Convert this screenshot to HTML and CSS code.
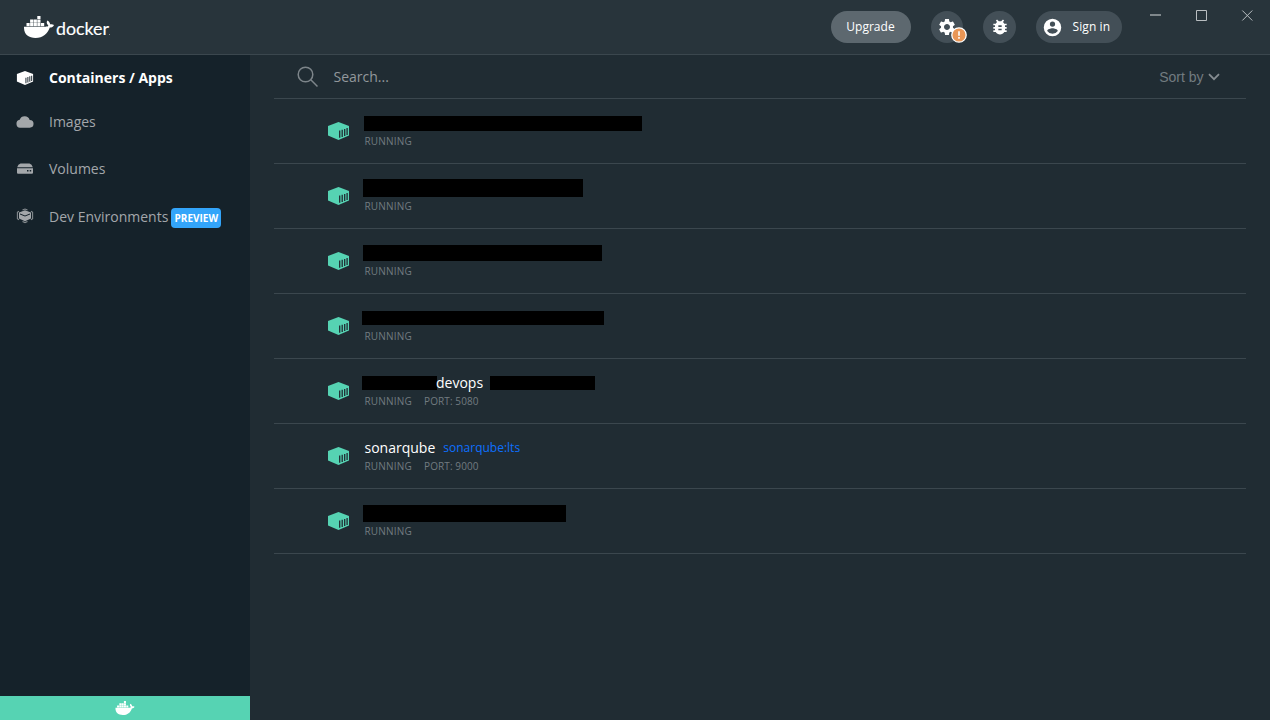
FILE: index.html
```html
<!DOCTYPE html>
<html lang="en">
<head>
<meta charset="utf-8">
<title>Docker Desktop</title>
<link rel="stylesheet" href="styles.css">
</head>
<body>
<svg class="defs" aria-hidden="true">
  <symbol id="whale" viewBox="0 0 30 22">
    <path d="M9.700 3.600h3.200v3.100h-3.200zM6.100 3.600h3.200v3.100h-3.200zM13.300 3.600h3.200v3.100h-3.200zM2.500 7.100h3.200v3.200h-3.200zM6.100 7.100h3.200v3.200h-3.200zM9.700 7.100h3.200v3.200h-3.200zM13.300 7.100h3.200v3.200h-3.200zM17 7.100h3.200v3.200h-3.200zM13.300 0h3.200v3.100h-3.200z"/>
    <path d="M0 10.700h21.500c1.600 0 2.600-.4 2.900-1.200C22.700 8.100 22.200 6.300 23.400 4.500c1.800 1.100 2.600 2.300 2.700 3.800 1.400-.3 2.800-.1 3.900.6-.8 1.800-2.200 2.600-4.200 2.700C23.600 18 19 22 11.500 22 4.500 22-.3 18.500 0 10.700z"/>
  </symbol>
  <symbol id="box" viewBox="0 0 22 18">
    <path fill="currentColor" d="M11 0 21.500 4v9.500L11 18 0.500 13.500V4z"/>
    <path class="slats" d="M12.200 8.600v7.200M14.700 7.800v7.100M17.200 6.900v7M19.600 6.100v6.900"/>
  </symbol>
</svg>
<div class="app">
  <header class="topbar">
    <div class="brand">
      <svg class="brand-whale"><use href="#whale"/></svg>
      <svg class="brand-name" viewBox="0 0 58 24"><text x="0" y="19" textLength="53" lengthAdjust="spacingAndGlyphs">docker</text><circle cx="53.600" cy="18.500" r=".4"/></svg>
    </div>
    <div class="actions">
      <button class="pill upgrade">Upgrade</button>
      <button class="pill round settings" aria-label="Settings">
        <svg width="20" height="20" viewBox="0 0 24 24"><path d="M19.140 12.940c.04-.3.060-.61.060-.94s-.02-.64-.07-.94l2.030-1.580c.18-.14.230-.41.120-.61l-1.920-3.320c-.12-.22-.37-.29-.59-.22l-2.390.96c-.5-.38-1.030-.7-1.620-.94l-.36-2.540c-.04-.24-.24-.41-.48-.41h-3.840c-.24 0-.43.170-.47.410l-.36 2.540c-.59.240-1.130.570-1.620.94l-2.390-.96c-.22-.08-.47 0-.59.220L2.740 8.870c-.12.210-.08.470.12.610l2.030 1.580c-.05.300-.09.630-.09.940s.02.640.07.940l-2.030 1.580c-.18.140-.23.410-.12.610l1.920 3.320c.12.220.37.290.59.220l2.390-.96c.5.380 1.030.7 1.620.94l.36 2.540c.05.240.24.410.48.410h3.840c.24 0 .44-.17.47-.41l.36-2.540c.59-.24 1.130-.56 1.620-.94l2.390.96c.22.080.47 0 .59-.22l1.920-3.320c.12-.22.070-.47-.12-.61zM12 15.600c-1.980 0-3.600-1.620-3.600-3.600s1.620-3.600 3.600-3.600 3.600 1.620 3.600 3.600-1.620 3.600-3.600 3.600z"/></svg>
        <svg class="alert" viewBox="0 0 16 16"><circle cx="8" cy="8" r="7.200"/><path d="M8 4.300v4.400M8 10v1.700"/></svg>
      </button>
      <button class="pill round bug" aria-label="Troubleshoot">
        <svg width="20" height="20" viewBox="0 0 24 24"><path d="M20 8h-2.810c-.45-.78-1.070-1.450-1.820-1.960L17 4.410 15.590 3l-2.170 2.170a6 6 0 0 0-2.830 0L8.410 3 7 4.410l1.620 1.630C7.880 6.550 7.260 7.220 6.810 8H4v2h2.090c-.05.330-.09.660-.09 1v1H4v2h2v1c0 .34.040.67.090 1H4v2h2.810a6 6 0 0 0 10.380 0H20v-2h-2.090c.05-.33.090-.66.090-1v-1h2v-2h-2v-1c0-.34-.04-.67-.09-1H20zm-6 8h-4v-2h4zm0-4h-4v-2h4z"/></svg>
      </button>
      <button class="pill signin">
        <svg width="21" height="21" viewBox="0 0 24 24"><path d="M12 2a10 10 0 1 0 0 20 10 10 0 0 0 0-20zm0 3a3 3 0 1 1 0 6 3 3 0 0 1 0-6zm0 14.200a7.200 7.200 0 0 1-6-3.220c.03-1.990 4-3.080 6-3.080s5.970 1.090 6 3.080a7.200 7.200 0 0 1-6 3.220z"/></svg>
        <span>Sign in</span>
      </button>
    </div>
    <svg class="window-buttons" viewBox="0 0 106 14"><path d="M1 7h11" class="minimize"/><path d="M47.500 2.500h10v10h-10z"/><path d="M93.300 2.500l10 10M103.300 2.500l-10 10"/></svg>
  </header>
  <div class="body">
    <aside class="sidebar">
      <nav>
        <a class="nav active"><svg class="nav-icon" viewBox="0 0 22 18"><use href="#box"/></svg>Containers / Apps</a>
        <a class="nav"><svg class="nav-icon" viewBox="0 0 18 14"><path fill="currentColor" d="M4 12.700a4 4 0 0 1-.3-7.900A5.300 5.300 0 0 1 13.700 4.900a3.900 3.900 0 0 1-.1 7.800z"/></svg>Images</a>
        <a class="nav"><svg class="nav-icon" viewBox="0 0 18 14"><path fill="currentColor" d="M4.500 1.500h9q2.500.5 3.300 3.800H1.200Q2 2 4.500 1.500zM1 6.200h16v4.600q0 1-1 1H2q-1 0-1-1z"/><path class="cut" d="M11 8h1.500v1.500H11zM13.700 8h1.500v1.500h-1.500z"/></svg>Volumes</a>
        <a class="nav"><svg class="nav-icon dev" viewBox="0 0 18 16"><path fill="currentColor" d="M9 2.200l6 2.400v6L9 13.200l-6-2.600v-6z"/><path class="lines" d="M4 6 9 8l5-2"/><path class="frame" d="M6.500 2 9 1l2.500 1M3 3.300 1.400 4.300v6.500l1.600 1M15 3.300l1.600 1v6.500l-1.600 1M6.500 13.500 9 14.600l2.500-1.100"/></svg>Dev Environments<span class="preview">PREVIEW</span></a>
      </nav>
      <div class="engine"><svg><use href="#whale"/></svg></div>
    </aside>
    <main class="content">
      <div class="search">
        <svg class="magnifier" viewBox="0 0 22 22"><circle cx="8.500" cy="8.500" r="7.300"/><path d="M13.800 13.800 20.500 20.500"/></svg>
        <span class="placeholder">Search...</span>
        <span class="sort">Sort by<svg viewBox="0 0 12 8"><path d="M1 1.200 6 6.200 11 1.200"/></svg></span>
      </div>
      <section class="list">
        <article class="row"><svg class="box"><use href="#box"/></svg><div class="info"><div class="name"><i class="bar b1"></i></div><div class="meta"><span>RUNNING</span></div></div></article>
        <article class="row"><svg class="box"><use href="#box"/></svg><div class="info"><div class="name"><i class="bar b2"></i></div><div class="meta"><span>RUNNING</span></div></div></article>
        <article class="row"><svg class="box"><use href="#box"/></svg><div class="info"><div class="name"><i class="bar b3"></i></div><div class="meta"><span>RUNNING</span></div></div></article>
        <article class="row"><svg class="box"><use href="#box"/></svg><div class="info"><div class="name"><i class="bar b4"></i></div><div class="meta"><span>RUNNING</span></div></div></article>
        <article class="row"><svg class="box"><use href="#box"/></svg><div class="info"><div class="name"><i class="bar b5"></i><span class="title devops">devops</span><i class="bar b6"></i></div><div class="meta"><span>RUNNING</span><span class="port">PORT: 5080</span></div></div></article>
        <article class="row"><svg class="box"><use href="#box"/></svg><div class="info"><div class="name sonar"><span class="title">sonarqube</span><span class="image">sonarqube:lts</span></div><div class="meta"><span>RUNNING</span><span class="port">PORT: 9000</span></div></div></article>
        <article class="row"><svg class="box"><use href="#box"/></svg><div class="info"><div class="name"><i class="bar b7"></i></div><div class="meta"><span>RUNNING</span></div></div></article>
      </section>
    </main>
  </div>
</div>
</body>
</html>
```
FILE: styles.css
```css
* { box-sizing: border-box; }
body { margin: 0; background: #202c33; color: #fff; font-family: "Open Sans", sans-serif; font-size: 14px; overflow: hidden; }
button { border: 0; color: #fff; font: inherit; padding: 0; }
svg { display: block; flex: none; fill: #fff; }
.defs { position: absolute; width: 0; height: 0; }
.app { width: 1270px; height: 720px; display: flex; flex-direction: column; }

.topbar { height: 55px; flex: none; background: #28343b; border-bottom: 1px solid #3b474e; display: flex; align-items: flex-start; }
.brand { display: flex; padding: 16px 0 0 24px; width: 831px; }
.brand-whale { width: 30px; height: 22px; }
.brand-name { width: 58px; height: 24px; margin-left: 2px; }
.brand-name text { font: 18px Lato, sans-serif; stroke: #fff; stroke-width: .15; }
.actions { display: flex; padding-top: 11px; font-size: 12px; line-height: 16px; }
.pill { height: 32px; border-radius: 16px; background: #434f57; display: flex; align-items: center; }
.upgrade { width: 80px; background: #5d686f; justify-content: center; padding-right: 1px; }
.round { width: 32px; justify-content: center; }
.settings { position: relative; margin-left: 20px; }
.alert { position: absolute; left: 20px; top: 16px; width: 16px; height: 16px; }
.alert circle { fill: #ea9655; stroke: #fff; stroke-width: 1.300; }
.alert path { stroke: #fff; stroke-width: 1.600; }
.bug { width: 33px; margin-left: 20px; }
.signin { width: 86px; margin-left: 20px; padding-left: 6px; }
.signin span { margin-left: 9.500px; letter-spacing: .1px; }
.window-buttons { width: 106px; height: 14px; margin: 8px 0 0 27px; fill: none; stroke: #b9bec1; stroke-width: 1; }
.minimize { stroke: #7f878b; stroke-width: 2; }

.body { flex: 1; display: flex; min-height: 0; }
.sidebar { width: 250px; background: #15222a; display: flex; flex-direction: column; justify-content: space-between; }
.nav { height: 47px; display: flex; align-items: center; padding-left: 16px; color: #a3a7aa; }
.nav:nth-child(2) { height: 43px; }
.nav:nth-child(3) { height: 51px; }
.nav:nth-child(4) { height: 44px; }
.nav.active { height: 45px; color: #fff; font-weight: 700; }
.nav-icon { width: 18px; height: 14px; margin-right: 15px; }
.nav-icon.dev { height: 16px; }
.slats { fill: none; stroke: #202c33; stroke-width: 1.300; }
.cut { fill: #15222a; }
.lines { fill: none; stroke: #15222a; stroke-width: 1; }
.frame { fill: none; stroke: #858b8f; stroke-width: 1.100; }
.preview { width: 50px; height: 20px; margin: 3px 0 0 3px; border-radius: 4px; background: #33a5fa; color: #fff; font-size: 10px; font-weight: 700; line-height: 20px; text-align: center; }
.engine { height: 24px; background: #56d3b3; padding: 5px 0 0 115px; }
.engine svg { width: 20px; height: 14px; }

.content { flex: 1; padding: 0 24px; }
.search { height: 44px; border-bottom: 1px solid #3b474e; display: flex; align-items: center; padding: 0 26.500px 0 23px; }
.magnifier { width: 22px; height: 22px; fill: none; stroke: #7d858a; stroke-width: 1.500; }
.placeholder { margin-left: 14.500px; color: #92989c; }
.sort { margin-left: auto; display: flex; align-items: center; gap: 4px; color: #727b80; font: 14px "Liberation Sans", sans-serif; }
.sort svg { width: 12px; height: 8px; fill: none; stroke: #858c91; stroke-width: 1.800; }
.row { height: 65px; border-bottom: 1px solid #3b474e; display: flex; padding: 14px 0 0 53px; }
.box { width: 23px; height: 18px; margin-top: 9px; color: #56d3b3; }
.info { padding-left: 12px; }
.name { height: 20px; display: flex; align-items: flex-start; }
.title { line-height: 20px; }
.image { margin-left: 8px; color: #0d70ff; font-size: 12px; line-height: 20px; }
.sonar { padding-left: 2.500px; }
.devops { margin-left: -1px; width: 54px; }
.meta { display: flex; padding-left: 2.500px; font-size: 10px; line-height: 16px; letter-spacing: .2px; color: #727b80; }
.port { margin-left: 12px; letter-spacing: .1px; }
.bar { display: block; flex: none; background: #000; }
.b1 { width: 278px; height: 15px; margin: 3px 0 0 2px; }
.b2 { width: 220px; height: 18px; margin: 1px 0 0 1px; }
.b3 { width: 239px; height: 16px; margin: 2px 0 0 1px; }
.b4 { width: 242px; height: 14px; margin-top: 3px; }
.b5 { width: 75px; height: 14px; margin-top: 3px; }
.b6 { width: 105px; height: 14px; margin-top: 3px; }
.b7 { width: 203px; height: 17px; margin: 2px 0 0 1px; }
```
